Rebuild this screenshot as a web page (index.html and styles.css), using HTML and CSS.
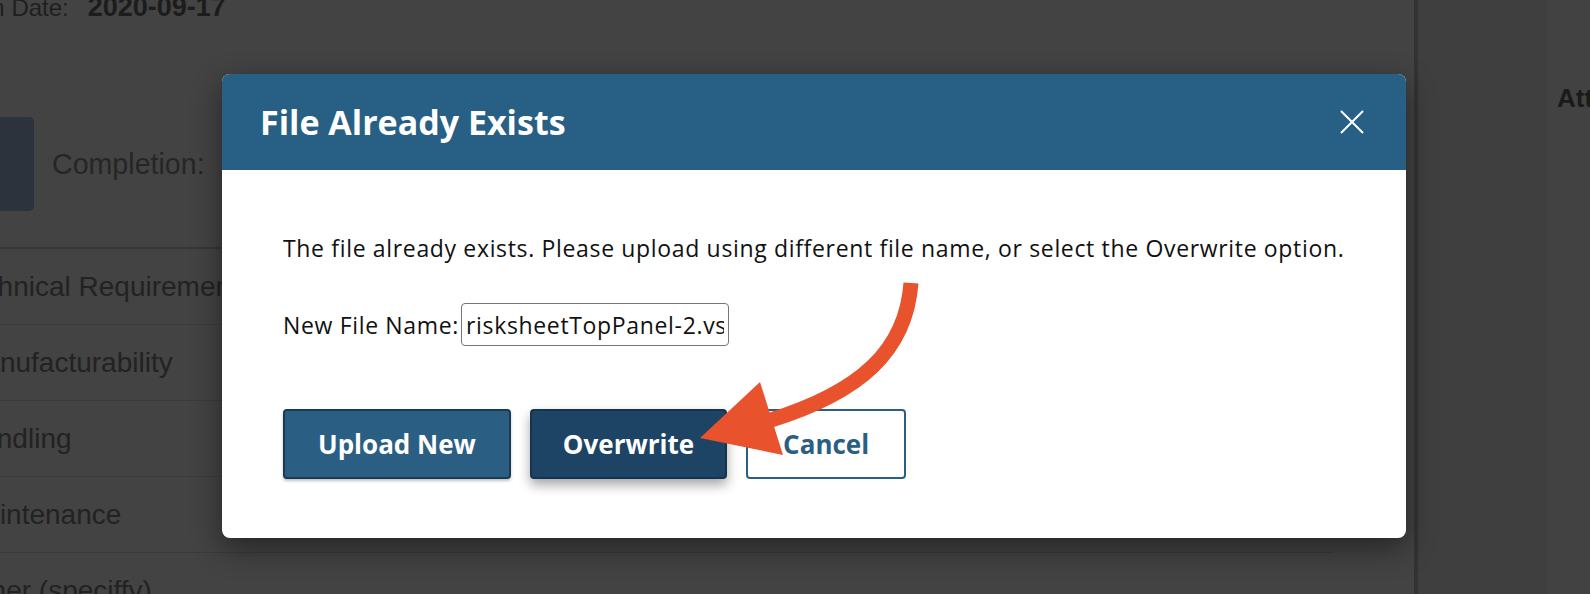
FILE: index.html
```html
<!DOCTYPE html>
<html lang="en">
<head>
<meta charset="utf-8">
<title>File Already Exists</title>
<link rel="stylesheet" href="styles.css">
</head>
<body>
<div class="screen">
  <div class="main">
    <div class="date-line">
      <span class="date-label">Creation Date:</span>
      <span class="date-value">2020-09-17</span>
    </div>
    <div class="completion">
      <div class="completion-box"></div>
      <span class="completion-label">Completion:</span>
    </div>
    <div class="req-table">
      <div class="req-row req-row-first">Technical Requirements</div>
      <div class="req-row">Manufacturability</div>
      <div class="req-row">Handling</div>
      <div class="req-row">Maintenance</div>
      <div class="req-row">Other (speciffy)</div>
    </div>
  </div>
  <div class="divider"></div>
  <div class="side-panel"></div>
  <div class="attach-panel">
    <h3 class="attach-title">Attachments</h3>
  </div>
</div>

<div class="dialog">
  <div class="dialog-header">
    <h2 class="dialog-title">File Already Exists</h2>
    <svg class="dialog-close" width="24" height="24" viewBox="0 0 24 24">
      <path d="M1 1 L23 23 M23 1 L1 23" stroke="#ffffff" stroke-width="2" fill="none"/>
    </svg>
  </div>
  <div class="dialog-body">
    <p class="dialog-message">The file already exists. Please upload using different file name, or select the Overwrite option.</p>
    <div class="file-row">
      <label class="file-label" for="newName">New File Name:</label>
      <input class="file-input" id="newName" type="text" value="risksheetTopPanel-2.vsdx">
    </div>
    <div class="button-row">
      <button class="btn btn-primary">Upload New</button>
      <button class="btn btn-dark">Overwrite</button>
      <button class="btn btn-outline">Cancel</button>
    </div>
  </div>
</div>

<svg class="annotation" width="1590" height="594" viewBox="0 0 1590 594">
  <path d="M911 283 C 906 350, 862 392, 768 421" stroke="#e8522c" stroke-width="15" fill="none"/>
  <polygon points="700,438 760,382 783,455" fill="#e8522c"/>
</svg>
</body>
</html>
```
FILE: styles.css
```css
html, body {
  margin: 0;
  padding: 0;
}
body {
  width: 1590px;
  height: 594px;
  overflow: hidden;
  position: relative;
  background: #434343;
  font-family: "Liberation Sans", Arial, sans-serif;
}
.screen {
  display: flex;
  height: 594px;
  overflow: hidden;
}
.main {
  width: 1414px;
  flex: none;
  background: #434343;
  color: #222222;
}
.date-line {
  display: flex;
  align-items: baseline;
  margin-top: -8px;
  margin-left: -86px;
  line-height: 30px;
  white-space: nowrap;
}
.date-label {
  font-size: 24px;
  color: #1f1f1f;
}
.date-value {
  font-size: 27px;
  font-weight: bold;
  color: #1c1c1c;
  margin-left: 19px;
}
.completion {
  display: flex;
  align-items: center;
  gap: 18px;
  margin-top: 94px;
  margin-left: -46px;
}
.completion-box {
  width: 80px;
  height: 94px;
  background: #2c333c;
  border-radius: 5px;
}
.completion-label {
  font-size: 28.6px;
  color: #262626;
}
.req-table {
  margin-top: 36px;
  margin-left: -39px;
  margin-right: 81px;
  border-top: 2px solid #373737;
}
.req-row {
  height: 75px;
  border-bottom: 1px solid #3b3b3b;
  display: flex;
  align-items: center;
  font-size: 28px;
  color: #222222;
  white-space: nowrap;
}
.req-row-first {
  text-indent: -7px;
}
.divider {
  width: 4px;
  flex: none;
  background: #333333;
}
.side-panel {
  width: 128px;
  flex: none;
  background: #3f3f3f;
}
.attach-panel {
  flex: 1;
  background: #424242;
  overflow: hidden;
  padding: 83px 0 0 11px;
}
.attach-title {
  margin: 0;
  font-size: 26px;
  line-height: 30px;
  font-weight: bold;
  color: #1a1a1a;
  white-space: nowrap;
}

.dialog {
  position: absolute;
  left: 222px;
  top: 74px;
  width: 1184px;
  height: 464px;
  background: #ffffff;
  border-radius: 8px;
  overflow: hidden;
  box-shadow: 0 10px 30px rgba(0, 0, 0, 0.45);
  font-family: "Open Sans", "Noto Sans", sans-serif;
}
.dialog-header {
  height: 96px;
  background: #285f84;
  display: flex;
  align-items: center;
  justify-content: space-between;
  padding: 0 42px 0 38px;
}
.dialog-title {
  margin: 0;
  color: #ffffff;
  font-size: 34px;
  font-weight: 700;
  line-height: 40px;
}
.dialog-close {
  display: block;
}
.dialog-body {
  padding: 63px 0 60px 61px;
}
.dialog-message {
  margin: 0;
  font-size: 23px;
  letter-spacing: 0.66px;
  line-height: 30px;
  color: #111111;
}
.file-row {
  display: flex;
  align-items: center;
  margin-top: 40px;
  font-size: 23px;
  letter-spacing: 0.66px;
  color: #111111;
}
.file-input {
  margin-left: 2px;
  width: 268px;
  height: 43px;
  box-sizing: border-box;
  border: 1.5px solid #767676;
  border-radius: 4px;
  padding: 0 4px;
  font-family: "Open Sans", "Noto Sans", sans-serif;
  font-size: 23px;
  letter-spacing: 0.66px;
  color: #111111;
  background: #ffffff;
}
.button-row {
  display: flex;
  gap: 19px;
  margin-top: 63px;
}
.btn {
  height: 70px;
  padding: 0 33px;
  border-radius: 4px;
  font-family: "Open Sans", "Noto Sans", sans-serif;
  font-size: 26px;
  font-weight: 700;
  box-sizing: border-box;
}
.btn-primary {
  background: #2a5f83;
  color: #ffffff;
  border: 2px solid #183a52;
  box-shadow: 0 2px 3px rgba(0, 0, 0, 0.25);
}
.btn-dark {
  background: #1d4464;
  color: #ffffff;
  border: 2px solid #15344d;
  padding: 0 31px;
  box-shadow: 0 6px 12px rgba(0, 0, 0, 0.35);
}
.btn-outline {
  background: #ffffff;
  color: #2a5f83;
  border: 2px solid #2a5f83;
  padding: 0 35px;
}
.annotation {
  position: absolute;
  left: 0;
  top: 0;
  pointer-events: none;
}
```
